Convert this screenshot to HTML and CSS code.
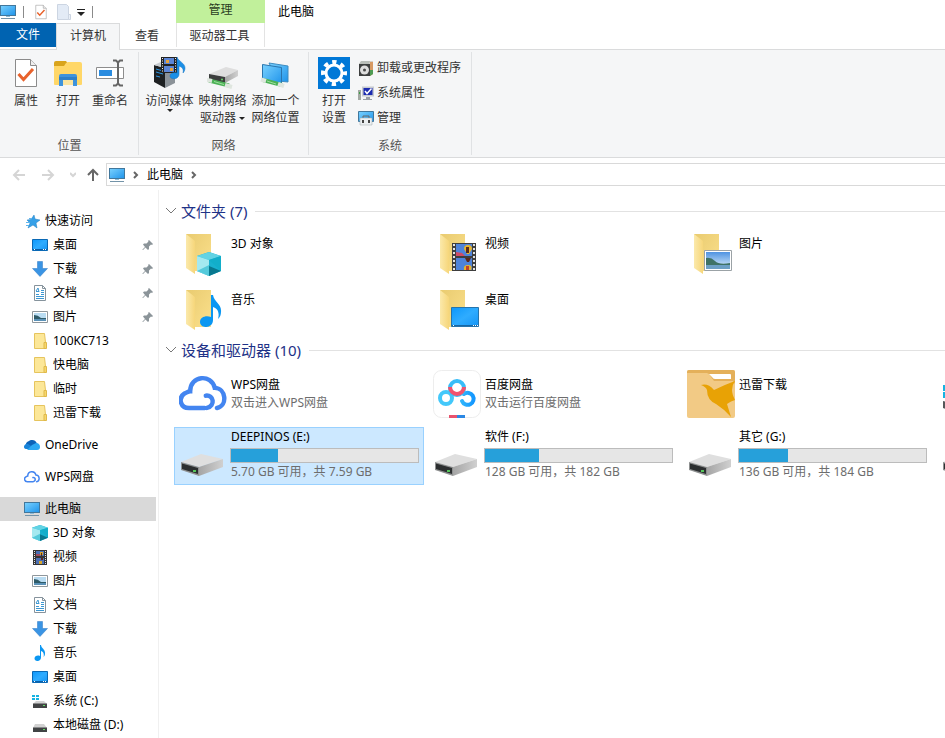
FILE: index.html
```html
<!DOCTYPE html>
<html lang="zh-CN">
<head>
    <meta charset="UTF-8">
    <title>此电脑</title>
    <link rel="stylesheet" href="styles.css">
</head>
<body>
<svg class="sprite" aria-hidden="true">
    <defs>
        <linearGradient id="g-screen" x1="0" y1="0" x2="1" y2="1">
            <stop offset="0" stop-color="#7ad2ff"/><stop offset="1" stop-color="#1e93ea"/>
        </linearGradient>
        <linearGradient id="g-desk" x1="0" y1="0" x2="1" y2="1">
            <stop offset="0" stop-color="#0c97fb"/><stop offset=".5" stop-color="#2facff"/><stop offset="1" stop-color="#1494f5"/>
        </linearGradient>
        <linearGradient id="g-folder" x1="0" y1="0" x2="1" y2="1">
            <stop offset="0" stop-color="#e9cb70"/><stop offset="1" stop-color="#fbe08c"/>
        </linearGradient>
        <linearGradient id="g-flap" x1="0" y1="0" x2="1" y2="0">
            <stop offset="0" stop-color="#fbe9ab"/><stop offset="1" stop-color="#f6d67a"/>
        </linearGradient>
        <linearGradient id="g-metal" x1="0" y1="0" x2="1" y2="0">
            <stop offset="0" stop-color="#a5a5a5"/><stop offset="1" stop-color="#d0d0d0"/>
        </linearGradient>
        <linearGradient id="g-sky" x1="0" y1="0" x2="0" y2="1">
            <stop offset="0" stop-color="#4f93e2"/><stop offset="1" stop-color="#e3f2fb"/>
        </linearGradient>
        <linearGradient id="g-baidu" x1="0" y1="0" x2="1" y2="0">
            <stop offset="0" stop-color="#2fb4fb"/><stop offset="1" stop-color="#1497ff"/>
        </linearGradient>
    </defs>

    <symbol id="pc" viewBox="0 0 16 16">
        <rect x=".5" y="1.5" width="15" height="10" fill="url(#g-screen)" stroke="#41779c"/>
        <path d="M6 12h4v1H6z" fill="#8ebbd6"/>
        <path d="M1 14.5h14" stroke="#7393a8"/>
    </symbol>
    <symbol id="props" viewBox="0 0 32 32">
        <path d="M5.500 2.500h15l6 6v21h-21z" fill="#fff" stroke="#8b8b8b"/>
        <path d="M20.500 2.500v6h6" fill="#eee" stroke="#8b8b8b"/>
        <path d="M8.500 17l5 5.500L23 12" fill="none" stroke="#e8622c" stroke-width="3"/>
    </symbol>
    <symbol id="blank" viewBox="0 0 16 16">
        <path d="M1.500.5h9l2 2v13h-11z" fill="#e3ebf6" stroke="#ccd5e2"/>
        <path d="M12.500 10.500h2v5h-2z" fill="#eaf0f8" stroke="#ccd5e2"/>
    </symbol>
    <symbol id="open" viewBox="0 0 32 32">
        <path d="M2 6q0-2 2-2h10l3 4v5H2z" fill="#d9a41c"/>
        <path d="M14 6l2-1h12q2 0 2 2v20q0 1-1 1H3q-1 0-1-1V9h10z" fill="#ffd768"/>
        <path d="M7 29V19q0-2 2-2h14q2 0 2 2v10h-4v-6H11v6z" fill="#3e93dc"/>
        <path d="M7 20h18v3H7z" fill="#2d7fc8"/>
        <path d="M11 23h10v5H11z" fill="#fbe5a0"/>
    </symbol>
    <symbol id="rename" viewBox="0 0 32 32">
        <path d="M2.500 10.500h27v11h-27z" fill="#fff" stroke="#8d8d8d"/>
        <path d="M5 13h13v6H5z" fill="#2a8ce0"/>
        <path d="M19 3.500h3l2 2 2-2h3M19 28.500h3l2-2 2 2h3M24 5v22" fill="none" stroke="#666" stroke-width="2"/>
    </symbol>
    <symbol id="media" viewBox="0 0 32 32">
        <path d="M0 8l11 3v20L0 25z" fill="#1d2022"/>
        <path d="M11 11l10-3v18l-10 5z" fill="#8b9298"/>
        <path d="M0 8l9-4 12 4-10 3z" fill="#c7ccd0"/>
        <path d="M2 12l7 2M2 15l7 2M2 19l4 1" stroke="#2c98e6"/>
        <path d="M7 0h16v16H7z" fill="#222"/>
        <path d="M10 1h10v6H10zM10 9h10v6H10z" fill="#5c85d5"/>
        <path d="M8.500 1v15M21.500 1v15" stroke="#eee" stroke-dasharray="1 1.500"/>
        <path d="M12 3h3v3h-3zM16 11h3v3h-3z" fill="#e8a33b"/>
        <path d="M23 0c1 4 8 6 8 11 0 2-1 4-2 5 1-4-1-6-4-7v8c0 6-9 6-9 2 0-3 4-4 7-3z" fill="#1b8fe6" stroke="#1273c2" stroke-width=".5"/>
    </symbol>
    <symbol id="netdrive" viewBox="0 0 32 32">
        <path d="M2 17l17-7 12 3-13 7z" fill="#dedede"/>
        <path d="M2 17l16 3v6L2 22z" fill="#3b3d3d"/>
        <path d="M18 20l13-7v6l-13 7z" fill="url(#g-metal)"/>
        <circle cx="15" cy="22.500" r="1" fill="#69d56b"/>
        <path d="M2 23.500l20 5" stroke="#4cb157" stroke-width="4"/>
        <path d="M0 23l5 1M18 28l7 2" stroke="#dfe6df" stroke-width="4"/>
        <path d="M7 24.500l10 3" stroke="#9be09a"/>
    </symbol>
    <symbol id="netloc" viewBox="0 0 32 32">
        <path d="M9 6l19 3v16l-10-1z" fill="url(#g-screen)" stroke="#3f8cc0"/>
        <path d="M2.500 7.500l19 3v17l-19-5z" fill="url(#g-screen)" stroke="#2a75ad"/>
        <path d="M3 23l19 5" stroke="#4cb157" stroke-width="4"/>
        <path d="M1 22.500l5 1.500M18 27l6 2" stroke="#dfe6df" stroke-width="4"/>
        <path d="M7 24l9 3" stroke="#9be09a"/>
    </symbol>
    <symbol id="settings" viewBox="0 0 32 32">
        <path d="M0 0h32v32H0z" fill="#0078d7"/>
        <circle cx="16" cy="16" r="11" fill="none" stroke="#fff" stroke-width="4" stroke-dasharray="4.320 4.320" stroke-dashoffset="2.160"/>
        <circle cx="16" cy="16" r="8" fill="none" stroke="#fff" stroke-width="3"/>
    </symbol>
    <symbol id="programs" viewBox="0 0 16 16">
        <path d="M1 4l3-3h11v13l-3 2z" fill="#d4d0c8"/>
        <path d="M12 2h3v12l-3 2z" fill="#d79a63"/>
        <path d="M3 1h9l-1 3H1z" fill="#b9beb9"/>
        <path d="M12 10h3v4l-3 2z" fill="#4e9b53"/>
        <path d="M1 4h11v12H1z" fill="#3d3f3f"/>
        <circle cx="6.500" cy="10" r="4.500" fill="#dedede"/>
        <circle cx="6.500" cy="10" r="1.500" fill="#4a4a4a"/>
    </symbol>
    <symbol id="sysprops" viewBox="0 0 16 16">
        <path d="M0 5h3v10H0z" fill="#a3a9a3"/>
        <path d="M1 7h1v2H1z" fill="#3c9c45"/>
        <path d="M4 1.500h12v10H4z" fill="#c6cad0"/>
        <path d="M5.500 3h9v7h-9z" fill="#1c2bb0"/>
        <path d="M7 6l2 2.500L13.500 3.500" fill="none" stroke="#fff" stroke-width="1.500"/>
        <path d="M8 12h4v2H8zM5 14h9v1H5z" fill="#9a9fa6"/>
    </symbol>
    <symbol id="manage" viewBox="0 0 16 16">
        <path d="M.5 1.500h15v10H.5z" fill="url(#g-screen)" stroke="#41779c"/>
        <path d="M5 8V6h6v2" fill="none" stroke="#666"/>
        <path d="M2 8h12v7H2z" fill="#eceff1" stroke="#9ca4aa" stroke-width=".5"/>
        <path d="M4 10h2v3H4zM10 10h2v3h-2z" fill="#444"/>
    </symbol>

    <symbol id="star" viewBox="0 0 16 16">
        <path d="M10 2l1 4 5 1-4 3 1 5-4-3-5 3 2-5-3-3 4-.5z" fill="#35a0e8" stroke="#1f7cc0" stroke-width=".5"/>
        <path d="M5 5.500h3M2 9.500h4M2 12.500h3" stroke="#5db5ee"/>
    </symbol>
    <symbol id="desktop" viewBox="0 0 16 16">
        <path d="M.5 2.500h15v11H.5z" fill="url(#g-desk)" stroke="#0a69b5"/>
        <path d="M1 12.500h14" stroke="#0a5fa8"/>
        <path d="M2 12.500h1M11 12.500h3" stroke="#fff" stroke-dasharray="1 1"/>
    </symbol>
    <symbol id="down" viewBox="0 0 16 16">
        <path d="M5.500.5h5v7h5L8 15.500.5 7.500h5z" fill="#3a94e4" stroke="#2c79c4" stroke-width=".5"/>
    </symbol>
    <symbol id="doc" viewBox="0 0 16 16">
        <path d="M2.500.5h8l3 3v12h-11z" fill="#fff" stroke="#86939c"/>
        <path d="M10.500.5v3h3" fill="none" stroke="#86939c"/>
        <path d="M4 6.500h3M9 5.500h3M9 7.500h3M4 9.500h3M9 9.500h3M4 11.500h8M4 13.500h8" stroke="#3c97d2"/>
        <path d="M4 6l2-3 1 4" fill="none" stroke="#3c97d2"/>
    </symbol>
    <symbol id="pic" viewBox="0 0 16 16">
        <path d="M.5 2.500h15v11H.5z" fill="#fff" stroke="#8f979c"/>
        <path d="M2 4h12v8H2z" fill="#b9dcf2"/>
        <path d="M2 6q4 0 7 3h5v2H2z" fill="#2f5b68"/>
        <path d="M2 10h12v2H2z" fill="#5a91b7"/>
    </symbol>
    <symbol id="folder" viewBox="0 0 16 16">
        <path d="M2.500.5h10l1 9v6h-11z" fill="#fce798" stroke="#e6c45d"/>
        <path d="M12 15.500V9.500h2.500v6z" fill="#f7d66b" stroke="#dfb94b"/>
    </symbol>
    <symbol id="onedrive" viewBox="0 0 16 16">
        <path d="M2 9a4 4 0 0 1 3-5 5 5 0 0 1 8 3L6 11z" fill="#0c62b8"/>
        <path d="M0 10a3 3 0 0 1 4-3l8 5H3q-3 0-3-2z" fill="#1783d9"/>
        <path d="M3 13l5-5 4-2c3 0 4 2 4 4s-1 3-3 3z" fill="#2ca8f2"/>
    </symbol>
    <symbol id="wps" viewBox="4 4 43 43">
        <path d="M27 38H13C5 38 3 29 9 25c2-1 4-2 5-2C14 9 33 7 36 20c10 0 12 16 2 18" fill="none" stroke="#4385f0" stroke-width="4" stroke-linecap="round"/>
        <path d="M28 27c7-1 9 9 1 11" fill="none" stroke="#4385f0" stroke-width="4" stroke-linecap="round"/>
    </symbol>
    <symbol id="cube" viewBox="0 0 24 24">
        <path d="M12 0l12 4v15l-12 5-12-5V4z" fill="#18b1cf"/>
        <path d="M0 4l12-4 12 4-12 4z" fill="#62d3e4"/>
        <path d="M0 4l12 4v16L0 19z" fill="#a4e9f0"/>
        <path d="M0 19l12-6v11z" fill="#55cadb"/>
        <path d="M12 8l12-4v15z" fill="#12aeca"/>
        <path d="M12 14l12 5-12 5z" fill="#08788f"/>
    </symbol>
    <symbol id="video-s" viewBox="0 0 16 16">
        <path d="M1 1h14v15H1z" fill="#353535"/>
        <path d="M2.500 2v13M13.500 2v13" stroke="#e3e3e3" stroke-dasharray="1 1"/>
        <path d="M4 2h8v5H4zM4 9h8v6H4z" fill="#4a6fb5"/>
        <path d="M4 5h4v2H4z" fill="#a34a5a"/>
        <path d="M8 3h3v3H8zM7 12h3v3H7z" fill="#d9a62b"/>
        <path d="M9 4h1v3H9zM9 9h2v2H9z" fill="#5b281c"/>
    </symbol>
    <symbol id="video" viewBox="0 0 24 28">
        <path d="M0 0h24v28H0z" fill="#3e3e3e"/>
        <path d="M2 1v27M22 1v27" stroke="#e3e3e3" stroke-width="2" stroke-dasharray="2 2"/>
        <path d="M4 1h16v12H4zM4 15h16v12H4z" fill="#4f83d9"/>
        <path d="M4 9l6 1 3 3H4z" fill="#cf4b65"/>
        <path d="M12 6q0-4 4-4t4 4l-3 5h-2z" fill="#e9b52b"/>
        <path d="M14 4h3v6h-3zM13 15h6l-2 4h-2z" fill="#5b281c"/>
        <path d="M12 27q-1-5 4-5t3 5z" fill="#e9b52b"/>
        <path d="M14 23h3v4h-3z" fill="#c1402d"/>
    </symbol>
    <symbol id="music" viewBox="0 0 22 32">
        <path d="M11 0h2c1 7 9 9 8 17 0 3-1 5-3 7 2-7-1-11-5-12v13c0 9-13 9-13 2 0-5 6-7 11-5z" fill="#0b97f2"/>
    </symbol>
    <symbol id="drive-s" viewBox="0 0 16 16">
        <path d="M3 7h9l3 4H1z" fill="#d2d2d2"/>
        <path d="M1 10.500h14V15H1z" fill="#414344"/>
        <path d="M11 12h2v1h-2z" fill="#62dd65"/>
    </symbol>
    <symbol id="drive-c" viewBox="0 0 16 16">
        <path d="M4 8h8l3 3H1z" fill="#d2d2d2"/>
        <path d="M1 10.500h14V15H1z" fill="#414344"/>
        <path d="M11 12h2v1h-2z" fill="#62dd65"/>
        <path d="M0 2h3v2H0zM4 2h3v2H4zM0 5h3v2H0zM4 5h3v2H4z" fill="#16b3e2"/>
    </symbol>
    <symbol id="pin" viewBox="0 0 12 12">
        <path d="M7 1l4 4-1 1-1-.5-2 2V10L6 11 3.500 8.500 1 11H.5v-.5L3 8 1 5.500 2 4.500h2.500l2-2L6 2z" fill="#8b9499"/>
    </symbol>

    <symbol id="big-folder" viewBox="0 0 48 48">
        <path d="M7 3h25v37H16z" fill="url(#g-folder)"/>
        <path d="M7 3l9 7v33L7 37z" fill="url(#g-flap)"/>
    </symbol>
    <symbol id="f-cube" viewBox="0 0 48 48">
        <use href="#big-folder"/>
        <use href="#cube" x="18" y="21" width="24" height="24"/>
    </symbol>
    <symbol id="f-video" viewBox="0 0 48 48">
        <use href="#big-folder"/>
        <use href="#video" x="19" y="12" width="24" height="28"/>
    </symbol>
    <symbol id="f-pic" viewBox="0 0 48 48">
        <use href="#big-folder"/>
        <path d="M17.500 19.500h27v20h-27z" fill="#fff" stroke="#9ba2a6"/>
        <path d="M19 21h24v17H19z" fill="url(#g-sky)"/>
        <path d="M19 27q5-1 9 3t15 2v3H19z" fill="#3f7265"/>
        <path d="M19 34h24v4H19z" fill="#6c9fc4"/>
    </symbol>
    <symbol id="f-music" viewBox="0 0 48 48">
        <use href="#big-folder"/>
        <use href="#music" x="21" y="8" width="22" height="32"/>
    </symbol>
    <symbol id="f-desktop" viewBox="0 0 48 48">
        <use href="#big-folder"/>
        <path d="M18.500 20.500h27v19h-27z" fill="url(#g-desk)" stroke="#2574ad"/>
        <path d="M19 38.500h26" stroke="#1767a5"/>
        <path d="M20 38.500h1M40 38.500h5" stroke="#fff" stroke-dasharray="1 1"/>
    </symbol>
    <symbol id="baidu" viewBox="0 0 48 48">
        <rect x=".5" y=".5" width="47" height="47" rx="8" fill="#fff" stroke="#ededed"/>
        <circle cx="13" cy="28" r="6" fill="none" stroke="#43c8fa" stroke-width="4"/>
        <path d="M17 24l2-2" stroke="#43c8fa" stroke-width="4"/>
        <path d="M31 24a6 6 0 1 1-2 7" fill="none" stroke="url(#g-baidu)" stroke-width="4" stroke-linecap="round"/>
        <path d="M31 24l-2-2" stroke="#2fb4fb" stroke-width="4"/>
        <circle cx="24" cy="18" r="7" fill="#fff" stroke="#38bdf8" stroke-width="4"/>
        <path d="M17 17a7 7 0 0 0 14 0" fill="none" stroke="#f2536e" stroke-width="4"/>
        <path d="M16 45h8v3h-8z" fill="#e9526d"/>
        <path d="M24 45h8v3h-8z" fill="#2b88e4"/>
    </symbol>
    <symbol id="xunlei" viewBox="0 0 48 48">
        <rect width="48" height="48" rx="2" fill="#f2ca85"/>
        <path d="M0 2q0-2 2-2h44q2 0 2 2v12l-2-3H27l-5-7-2-1H0z" fill="#e4b05a"/>
        <path d="M22 4h21q1 0 1 1v4H28q-2 0-3-2z" fill="#fff"/>
        <path d="M14 15q7-2 13 5 10-5 21-9-3 4-3 9 0 4 3 10-4 1-8 4l4 13q-7-8-15-13-9-4-9-14-1-3-6-5z" fill="#e8a205"/>
    </symbol>
    <symbol id="drive" viewBox="0 0 48 48">
        <path d="M2 30l20-8 22 5-24 8z" fill="#dfdfdf"/>
        <path d="M20 35l24-8v8l-24 9z" fill="url(#g-metal)"/>
        <path d="M2 30l18 5v9L2 38z" fill="#8e9090"/>
        <path d="M3 31.500l16 4.500v6L3 37z" fill="#2c2f30"/>
        <path d="M14 38h3v2h-3z" fill="#55c65a"/>
    </symbol>
    <symbol id="win-drive" viewBox="0 0 48 48">
        <path d="M2 15h6v6H2zM9 15h6v6H9zM2 22h6v6H2zM9 22h6v6H9z" fill="#16b3e2"/>
        <path d="M2 31l18 5v8L2 38z" fill="#55585a"/>
        <path d="M20 36l24-9v8l-24 9z" fill="url(#g-metal)"/>
    </symbol>
</svg>

<header class="titlebar">
    <div class="quick-access">
        <svg class="icon"><use href="#pc"/></svg>
        <span class="divider"></span>
        <button title="属性"><svg class="icon"><use href="#props"/></svg></button>
        <button title="新建文件夹"><svg class="icon"><use href="#blank"/></svg></button>
        <button class="customize" title="自定义快速访问工具栏">
            <svg width="8" height="8" viewBox="0 0 8 8"><path d="M0 1.500h8" stroke="#222" stroke-width="1"/><path d="M0 4h8L4 8z" fill="#222"/></svg>
        </button>
        <span class="divider"></span>
    </div>
    <div class="context-group">管理</div>
    <h1>此电脑</h1>
</header>

<nav class="tabs">
    <button class="tab file">文件</button>
    <button class="tab active">计算机</button>
    <button class="tab">查看</button>
    <button class="tab context">驱动器工具</button>
</nav>

<section class="ribbon">
    <div class="group location">
        <div class="tools">
            <button class="tool"><svg><use href="#props"/></svg>属性</button>
            <button class="tool"><svg><use href="#open"/></svg>打开</button>
            <button class="tool"><svg><use href="#rename"/></svg>重命名</button>
        </div>
        <div class="group-name">位置</div>
    </div>
    <div class="group network">
        <div class="tools">
            <button class="tool"><svg><use href="#media"/></svg>访问媒体<i class="caret"></i></button>
            <button class="tool"><svg><use href="#netdrive"/></svg>映射网络<span>驱动器 <i class="caret"></i></span></button>
            <button class="tool"><svg><use href="#netloc"/></svg>添加一个<span>网络位置</span></button>
        </div>
        <div class="group-name">网络</div>
    </div>
    <div class="group system">
        <div class="tools">
            <button class="tool"><svg><use href="#settings"/></svg>打开<span>设置</span></button>
            <div class="tool-list">
                <button><svg class="icon"><use href="#programs"/></svg>卸载或更改程序</button>
                <button><svg class="icon"><use href="#sysprops"/></svg>系统属性</button>
                <button><svg class="icon"><use href="#manage"/></svg>管理</button>
            </div>
        </div>
        <div class="group-name">系统</div>
    </div>
</section>

<div class="address-row">
    <button class="nav-btn off" title="后退"><svg width="14" height="14" viewBox="0 0 14 14"><path d="M13 7H2M7 2L2 7l5 5"/></svg></button>
    <button class="nav-btn off" title="前进"><svg width="14" height="14" viewBox="0 0 14 14"><path d="M1 7h11M7 2l5 5-5 5"/></svg></button>
    <button class="nav-btn off recent" title="最近"><svg width="6" height="6" viewBox="0 0 6 6"><path d="M0 1l3 3 3-3"/></svg></button>
    <button class="nav-btn up" title="上移"><svg width="14" height="14" viewBox="0 0 14 14"><path d="M7 13V2M2 7l5-5 5 5"/></svg></button>
    <div class="address">
        <svg class="icon"><use href="#pc"/></svg>
        <svg class="sep" viewBox="0 0 6 8"><path d="M1 1l3 3-3 3"/></svg>
        <a href="#">此电脑</a>
        <svg class="sep" viewBox="0 0 6 8"><path d="M1 1l3 3-3 3"/></svg>
    </div>
</div>

<main>
    <nav class="tree">
        <a class="root quick" href="#"><svg class="icon"><use href="#star"/></svg>快速访问</a>
        <a href="#"><svg class="icon"><use href="#desktop"/></svg>桌面<svg class="pin"><use href="#pin"/></svg></a>
        <a href="#"><svg class="icon"><use href="#down"/></svg>下载<svg class="pin"><use href="#pin"/></svg></a>
        <a href="#"><svg class="icon"><use href="#doc"/></svg>文档<svg class="pin"><use href="#pin"/></svg></a>
        <a href="#"><svg class="icon"><use href="#pic"/></svg>图片<svg class="pin"><use href="#pin"/></svg></a>
        <a href="#"><svg class="icon"><use href="#folder"/></svg>100KC713</a>
        <a href="#"><svg class="icon"><use href="#folder"/></svg>快电脑</a>
        <a href="#"><svg class="icon"><use href="#folder"/></svg>临时</a>
        <a href="#"><svg class="icon"><use href="#folder"/></svg>迅雷下载</a>

        <a class="root" href="#"><svg class="icon"><use href="#onedrive"/></svg>OneDrive</a>
        <a class="root" href="#"><svg class="icon"><use href="#wps"/></svg>WPS网盘</a>
        <a class="root selected" href="#"><svg class="icon"><use href="#pc"/></svg>此电脑</a>
        <a href="#"><svg class="icon"><use href="#cube"/></svg>3D 对象</a>
        <a href="#"><svg class="icon"><use href="#video-s"/></svg>视频</a>
        <a href="#"><svg class="icon"><use href="#pic"/></svg>图片</a>
        <a href="#"><svg class="icon"><use href="#doc"/></svg>文档</a>
        <a href="#"><svg class="icon"><use href="#down"/></svg>下载</a>
        <a href="#"><svg class="icon"><use href="#music"/></svg>音乐</a>
        <a href="#"><svg class="icon"><use href="#desktop"/></svg>桌面</a>
        <a href="#"><svg class="icon"><use href="#drive-c"/></svg>系统 (C:)</a>
        <a href="#"><svg class="icon"><use href="#drive-s"/></svg>本地磁盘 (D:)</a>
    </nav>

    <div class="content">
        <h2><svg viewBox="0 0 12 8"><path d="M1 1l5 5 5-5"/></svg>文件夹 (7)</h2>
        <div class="tiles">
            <a class="tile" href="#"><svg><use href="#f-cube"/></svg><div class="info">3D 对象</div></a>
            <a class="tile" href="#"><svg><use href="#f-video"/></svg><div class="info">视频</div></a>
            <a class="tile" href="#"><svg><use href="#f-pic"/></svg><div class="info">图片</div></a>
            <a class="tile first" href="#"><svg><use href="#f-music"/></svg><div class="info">音乐</div></a>
            <a class="tile" href="#"><svg><use href="#f-desktop"/></svg><div class="info">桌面</div></a>
        </div>

        <h2><svg viewBox="0 0 12 8"><path d="M1 1l5 5 5-5"/></svg>设备和驱动器 (10)</h2>
        <div class="tiles drives">
            <a class="tile" href="#"><svg><use href="#wps"/></svg><div class="info">WPS网盘<small>双击进入WPS网盘</small></div></a>
            <a class="tile" href="#"><svg><use href="#baidu"/></svg><div class="info">百度网盘<small>双击运行百度网盘</small></div></a>
            <a class="tile" href="#"><svg><use href="#xunlei"/></svg><div class="info">迅雷下载</div></a>
            <a class="tile" href="#"><svg><use href="#win-drive"/></svg></a>
            <a class="tile disk selected" href="#">
                <svg><use href="#drive"/></svg>
                <div class="info">DEEPINOS (E:)<div class="bar"><div style="width: 25%"></div></div><small>5.70 GB 可用，共 7.59 GB</small></div>
            </a>
            <a class="tile disk" href="#">
                <svg><use href="#drive"/></svg>
                <div class="info">软件 (F:)<div class="bar"><div style="width: 29%"></div></div><small>128 GB 可用，共 182 GB</small></div>
            </a>
            <a class="tile disk" href="#">
                <svg><use href="#drive"/></svg>
                <div class="info">其它 (G:)<div class="bar"><div style="width: 26%"></div></div><small>136 GB 可用，共 184 GB</small></div>
            </a>
            <a class="tile disk" href="#"><svg><use href="#drive"/></svg></a>
        </div>
    </div>
</main>
</body>
</html>
```
FILE: styles.css
```css
* {
    box-sizing: border-box;
}

body {
    margin: 0;
    min-height: 100vh;
    display: flex;
    flex-direction: column;
    overflow: hidden;
    background: #fff;
    color: #000;
    font: 12px/16px "Noto Sans", "Noto Sans CJK SC", sans-serif;
}

button {
    border: none;
    padding: 0;
    background: none;
    color: inherit;
    font: inherit;
}

a {
    color: inherit;
    text-decoration: none;
}

svg {
    display: block;
    flex-shrink: 0;
}

.sprite {
    position: absolute;
    width: 0;
    height: 0;
}

.icon {
    width: 16px;
    height: 16px;
}

/* title bar */
.titlebar {
    display: flex;
    height: 23px;
}

.quick-access {
    display: flex;
    align-items: center;
    width: 176px;
    gap: 7px;
}

.quick-access .divider {
    width: 1px;
    height: 12px;
    background: #8a8a8a;
}

.quick-access .divider + button {
    margin-left: 2px;
}

.quick-access .customize {
    margin-left: -2px;
}

.context-group {
    width: 89px;
    padding-top: 2px;
    background: #c1f09b;
    color: #2b3d1f;
    text-align: center;
}

.titlebar h1 {
    margin: 4px 0 0 13px;
    font-size: 12px;
    font-weight: normal;
}

/* tabs */
.tabs {
    display: flex;
    height: 27px;
    border-bottom: 1px solid #dadbdc;
    color: #333;
}

.tab {
    width: 56px;
    height: 24px;
    padding: 1px 2px 0 0;
}

.tab.file {
    padding: 0;
    background: #0063b1;
    color: #fff;
}

.tab.active {
    width: 64px;
    height: 27px;
    padding: 0 0 2px;
    border: 1px solid #dadbdc;
    border-bottom: none;
    background: #f5f6f7;
}

.tab.context {
    width: 89px;
    border-left: 1px solid #e3e3e3;
    border-right: 1px solid #e3e3e3;
}

/* ribbon */
.ribbon {
    display: flex;
    height: 108px;
    border-bottom: 1px solid #dadbdc;
    background: #f5f6f7;
    color: #333;
}

.group {
    display: flex;
    flex-direction: column;
    justify-content: space-between;
    margin: 2px 0;
    padding: 5px 4px 1px;
    border-right: 1px solid #e0e2e4;
}

.location {
    width: 139px;
    padding-left: 5px;
}

.network {
    width: 170px;
}

.system {
    width: 163px;
}

.tools {
    display: flex;
}

.tool {
    display: flex;
    flex-direction: column;
    align-items: center;
    width: 42px;
    white-space: nowrap;
}

.network .tool {
    width: 53px;
}

.tool svg {
    width: 32px;
    height: 32px;
    margin-bottom: 4px;
}

.tool span {
    margin-top: 1px;
}

.caret {
    display: inline-block;
    border: 3px solid transparent;
    border-top-color: #222;
    border-bottom: none;
    vertical-align: middle;
}

.tool-list {
    display: flex;
    flex-direction: column;
    margin: -2px 0 0 3px;
}

.tool-list button {
    display: flex;
    align-items: center;
    gap: 3px;
    height: 25px;
}

.group-name {
    text-align: center;
    color: #555;
}

/* address bar */
.address-row {
    display: flex;
    align-items: center;
    height: 32px;
    padding: 1px 0 0 12px;
}

.nav-btn {
    margin-right: 15px;
}

.nav-btn path, .address .sep path {
    fill: none;
    stroke: #666;
    stroke-width: 2;
}

.nav-btn.off path {
    stroke: #d5d5d5;
}

.nav-btn.recent {
    margin-right: 10px;
}

.nav-btn.up {
    margin-right: 6px;
}

.address {
    flex: 1;
    display: flex;
    align-items: center;
    gap: 8px;
    height: 23px;
    padding-left: 2px;
    border: 1px solid #d9d9d9;
    border-right: none;
}

.address .sep {
    width: 6px;
    height: 8px;
}

/* navigation tree */
main {
    flex: 1;
    display: flex;
}

.tree {
    width: 159px;
    flex-shrink: 0;
    padding: 19px 2px 0 0;
    border-right: 1px solid #f0f0f0;
}

.tree a {
    display: flex;
    align-items: center;
    gap: 5px;
    height: 24px;
    padding-left: 32px;
}

.tree .root {
    margin-top: 8px;
    padding-left: 24px;
}

.tree .quick {
    margin-top: 0;
}

.tree .selected {
    background: #d9d9d9;
}

.pin {
    width: 12px;
    height: 12px;
    margin: 0 2px 0 auto;
}

/* content */
.content {
    flex: 1;
    min-width: 0;
    overflow: hidden;
    padding: 11px 0 0 15px;
}

.content h2 {
    display: flex;
    align-items: center;
    gap: 4px;
    height: 20px;
    margin: 0 0 7px -9px;
    color: #1e3287;
    font-size: 15px;
    font-weight: normal;
}

.content h2 svg {
    width: 12px;
    height: 8px;
}

.content h2 path {
    fill: none;
    stroke: #777;
}

.content h2::after {
    content: "";
    flex: 1;
    height: 1px;
    margin-left: 4px;
    background: #e2e2e2;
}

.tiles {
    display: grid;
    grid-template-columns: repeat(4, 250px);
    column-gap: 4px;
}

.tile {
    display: flex;
    gap: 4px;
    height: 56px;
    padding: 2px 4px;
    border: 1px solid transparent;
}

.tile.first {
    grid-column: 1;
}

.tile > svg {
    width: 48px;
    height: 48px;
}

.info {
    flex: 1;
    padding-top: 5px;
}

.info small {
    display: block;
    margin-top: 2px;
    color: #6d6d6d;
    font-size: 12px;
}

.drives {
    row-gap: 4px;
}

.drives .info {
    padding-top: 7px;
}

.tile.disk {
    height: 58px;
    padding-top: 4px;
}

.disk .info {
    padding-top: 0;
    margin-top: -3px;
}

.disk small {
    margin-top: 1px;
}

.disk.selected {
    border-color: #99d1ff;
    background: #cce8ff;
}

.bar {
    height: 15px;
    margin: 3px 0 0 -1px;
    border: 1px solid #bcbcbc;
    background: #e6e6e6;
}

.bar div {
    height: 13px;
    background: #26a0da;
}
```
